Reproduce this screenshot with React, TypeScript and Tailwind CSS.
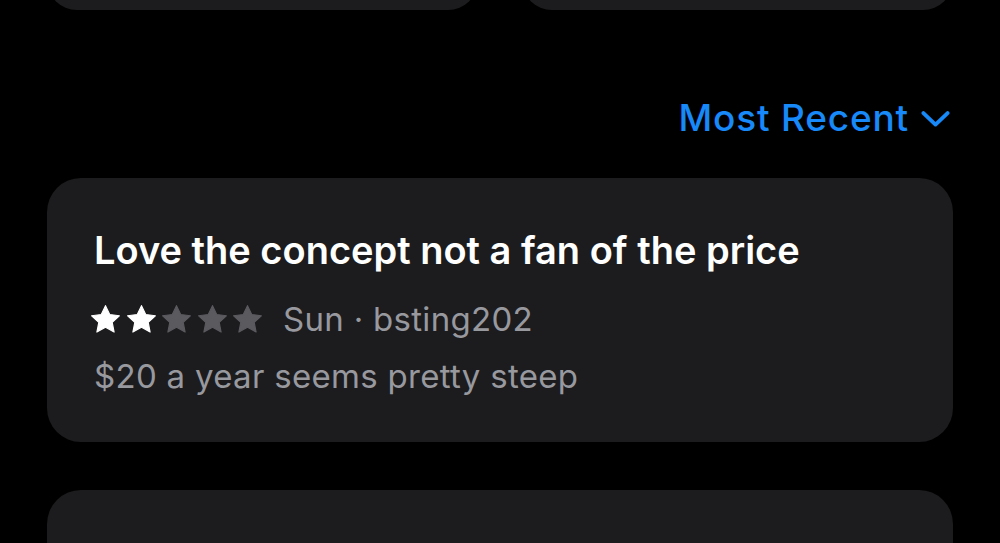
const STAR = "M12 2.5l2.9 6.1 6.6.8-4.9 4.6 1.3 6.6L12 17.3l-5.9 3.3 1.3-6.6-4.9-4.6 6.6-.8z";

function Stars({ rating }: { rating: number }) {
  return (
    <div className="flex items-center gap-[0.5px] -ml-[6px]">
      {[1, 2, 3, 4, 5].map((i) => (
        <svg key={i} viewBox="0 0 24 24" className="w-[35px] h-[35px]">
          <path d={STAR} fill={i <= rating ? "#ffffff" : "#5a5a5f"} stroke={i <= rating ? "#ffffff" : "#5a5a5f"} strokeWidth="0.8" strokeLinejoin="round" />
        </svg>
      ))}
    </div>
  );
}

export default function App() {
  return (
    <div
      className="w-[1000px] h-[543px] overflow-hidden bg-black px-[47px]"
      style={{ fontFamily: "Inter, 'Noto Sans', sans-serif" }}
    >
      {/* cards from the row above, only the bottom edge shows */}
      <div className="flex gap-[44px] -mt-[50px]">
        <div className="w-[431px] h-[60px] rounded-[30px] bg-[#1c1c1e]" />
        <div className="w-[431px] h-[60px] rounded-[30px] bg-[#1c1c1e]" />
      </div>

      <div className="flex justify-end items-center gap-[12px] mt-[88px] pr-[4px]">
        <span className="text-[37px] leading-[40px] font-medium text-[#1789f8] tracking-[0.8px]">Most Recent</span>
        <svg viewBox="0 0 24 24" className="w-[29px] h-[29px] -mr-[1px]" fill="none" stroke="#1789f8" strokeWidth="3.2" strokeLinecap="round" strokeLinejoin="round">
          <path d="M2 7.5l10 9.5 10-9.5" />
        </svg>
      </div>

      <div className="mt-[40px] h-[264px] rounded-[34px] bg-[#1c1c1e] px-[47px] pt-[50px]">
        <div className="text-[38px] leading-[44px] font-semibold text-white">
          Love the concept not a fan of the price
        </div>
        <div className="flex items-center gap-[18px] mt-[28px]">
          <Stars rating={2} />
          <span className="text-[33px] leading-[38px] text-[#98989f] tracking-[0.3px]">Sun · bsting202</span>
        </div>
        <div className="text-[33px] leading-[38px] text-[#98989f] tracking-[0.3px] mt-[19px]">
          $20 a year seems pretty steep
        </div>
      </div>

      <div className="mt-[48px] h-[200px] rounded-[34px] bg-[#1c1c1e]" />
    </div>
  );
}
